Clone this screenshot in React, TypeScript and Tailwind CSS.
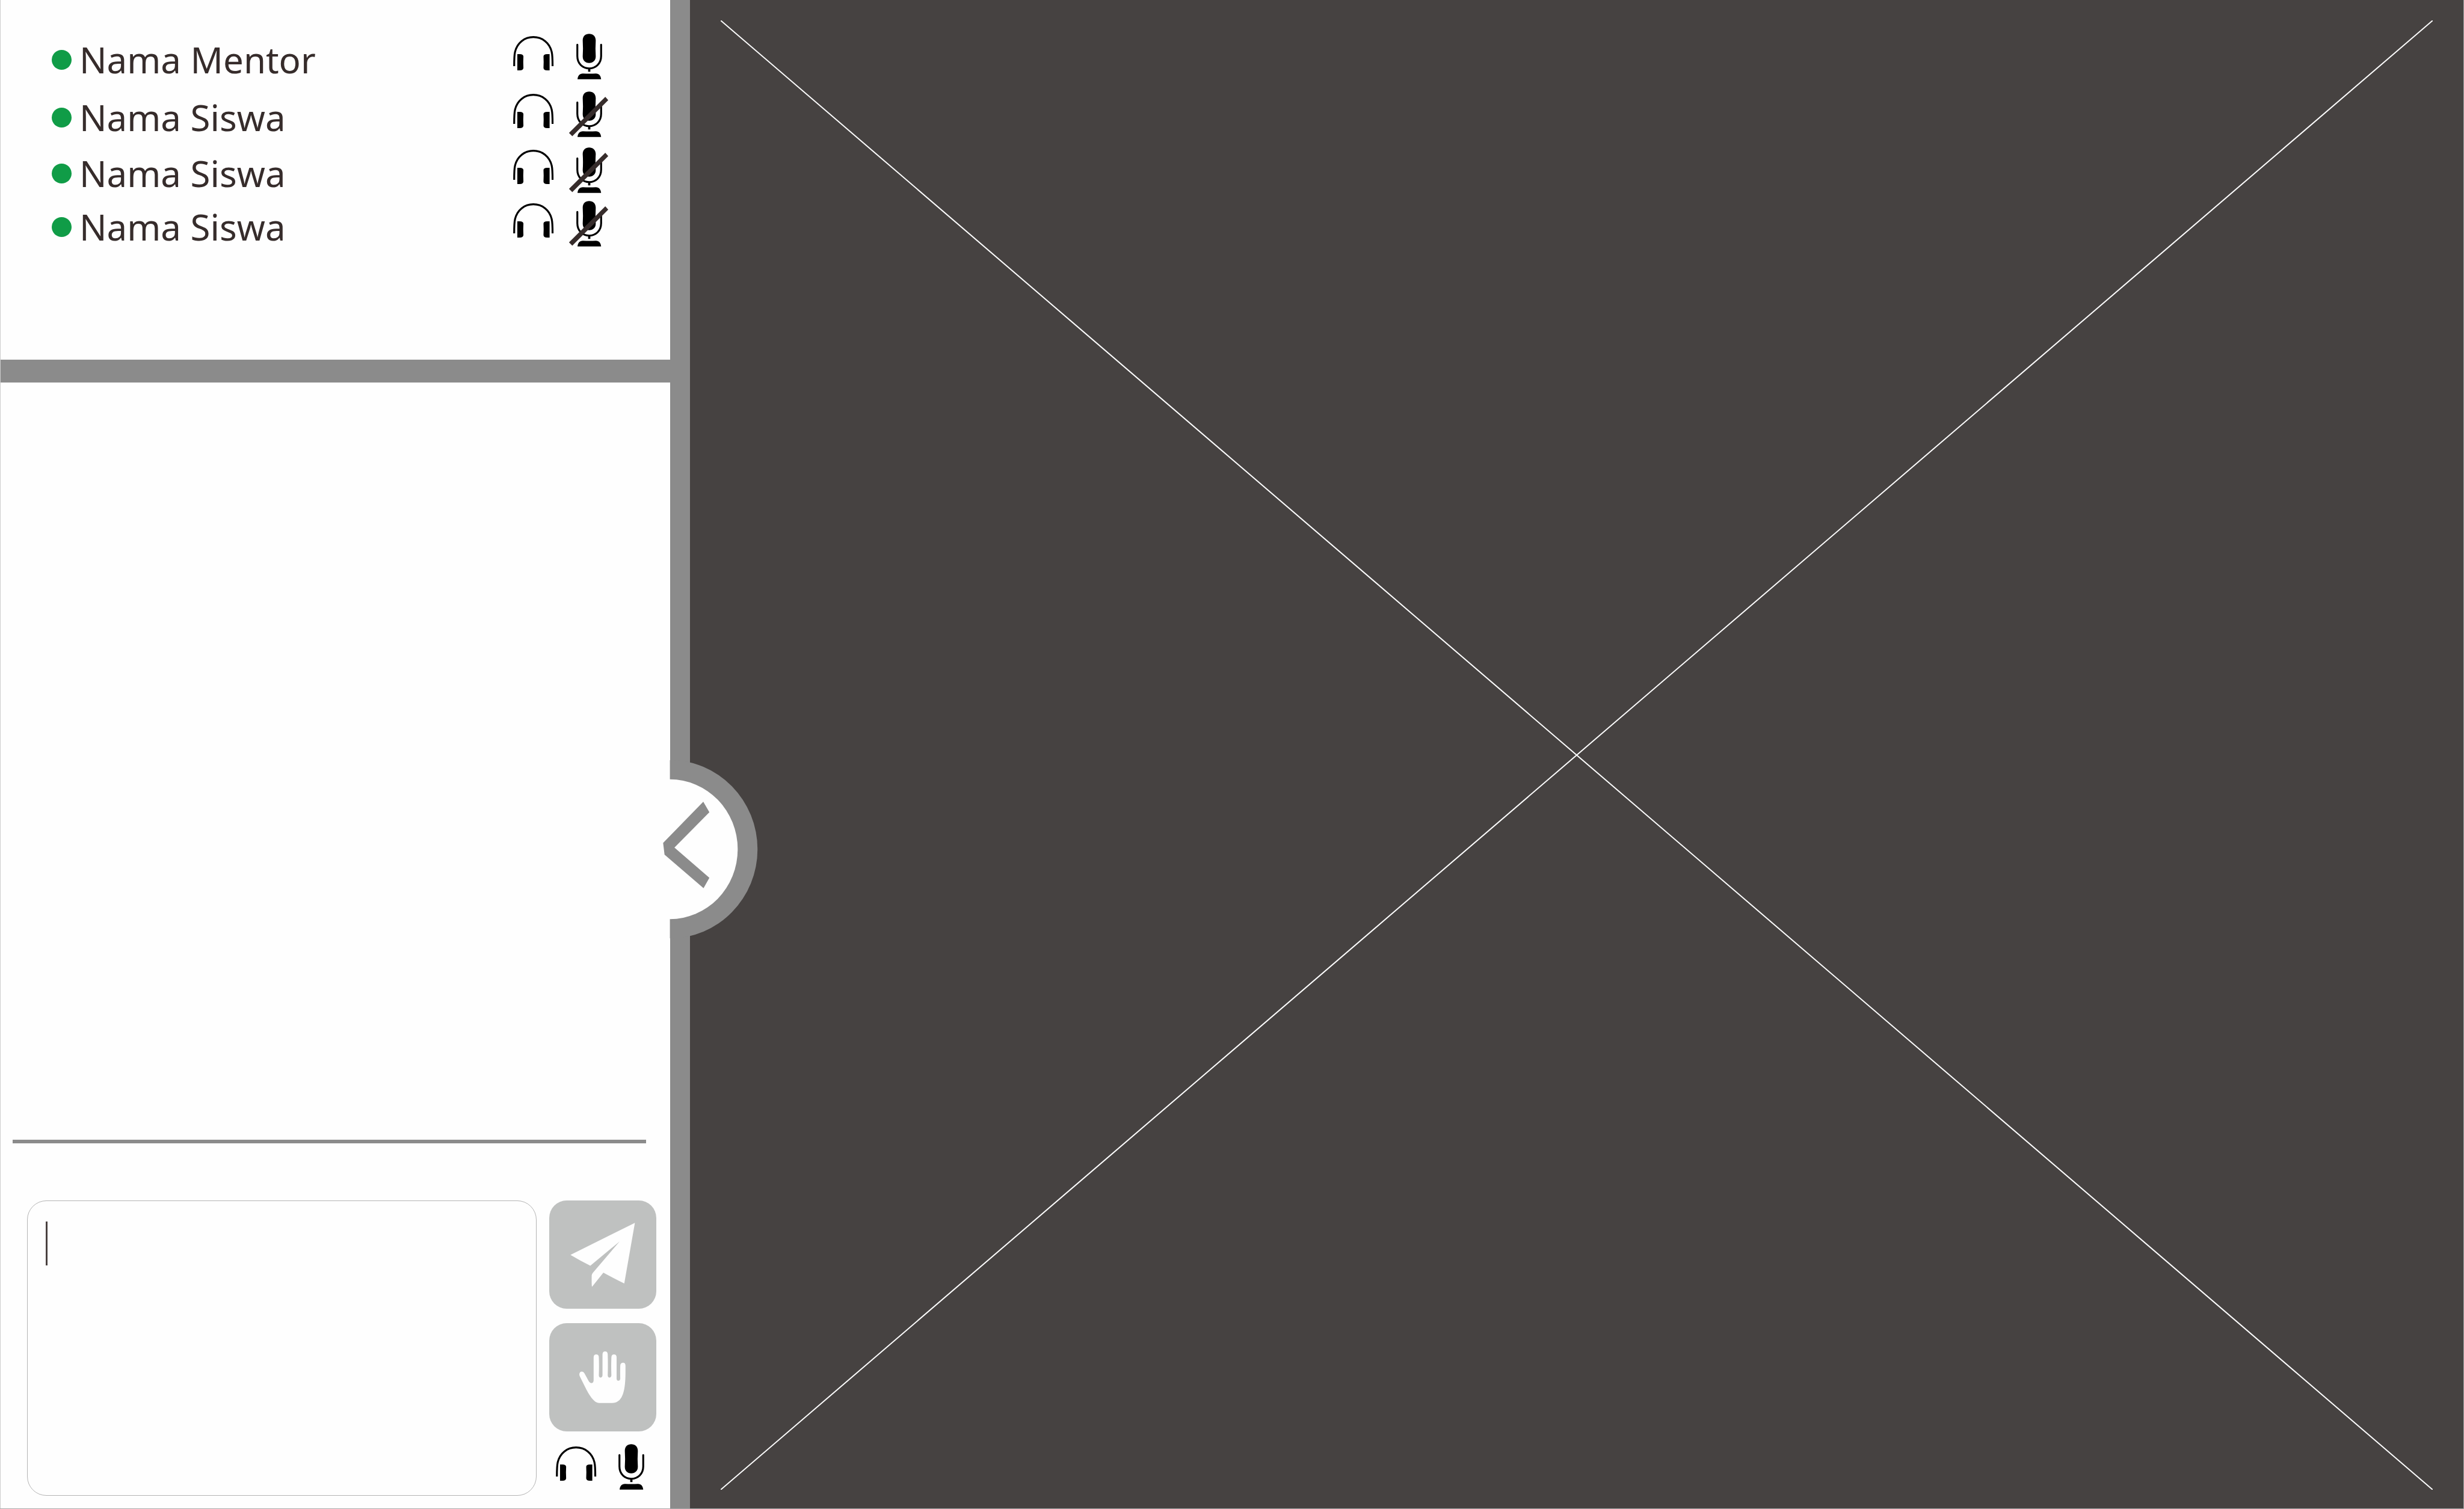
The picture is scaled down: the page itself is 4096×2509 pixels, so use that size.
type Participant = { name: string; muted: boolean; spacing: string };

const participants: Participant[] = [
  { name: "Nama Mentor", muted: false, spacing: "" },
  { name: "Nama Siswa", muted: true, spacing: "mt-5" },
  { name: "Nama Siswa", muted: true, spacing: "mt-[17px]" },
  { name: "Nama Siswa", muted: true, spacing: "mt-[13px]" },
];

function HeadphonesIcon() {
  return (
    <svg viewBox="126 72 231 261" className="block h-[76px] w-[67px] overflow-visible" aria-hidden="true">
      <path
        d="M132 258C132 210 132 195 137 175C149 125 190 91 242 91C294 91 335 125 347 175C352 195 352 210 352 258"
        fill="none"
        stroke="#000"
        strokeWidth="11"
      />
      <path d="M150 189H165Q183 189 185 202Q183 235 185 268Q183 281 165 282H150Z" />
      <path d="M335 189H320Q301 189 300 202Q302 235 300 268Q301 281 320 282H335Z" />
    </svg>
  );
}

function MicIcon({ muted = false }: { muted?: boolean }) {
  return (
    <svg viewBox="487 72 149 261" className="block h-[76px] w-[43px] overflow-visible" aria-hidden="true">
      <path d="M524 110C524 85 540 72 561 72S599 85 599 110Q596 156 599 202C599 226 583 240 561 240S524 226 524 202Q527 156 524 110Z" />
      <path
        d="M493 134V200C493 245 525 271 561 271S630 245 630 200V134"
        fill="none"
        stroke="#000"
        strokeWidth="11"
        strokeLinecap="round"
      />
      <path d="M555 271H568V290H555Z" />
      <path d="M494 333C496 312 506 301 525 300Q562 302 600 300C618 301 628 312 630 333Z" />
      {muted && <path d="M654 102L671 121L464 329L445 310Z" fill="#362c2b" />}
    </svg>
  );
}

function PlaneIcon() {
  return (
    <svg viewBox="63 53 615 619" className="block size-full" aria-hidden="true">
      <path
        d="M185 364L555 180L494 528Q434 499 374 466L309 547Q306 547 307 482Q308 474 313 468L467 287L299 426Q240 397 185 364Z"
        fill="#fefefe"
      />
    </svg>
  );
}

function HandIcon() {
  return (
    <svg viewBox="63 67 615 619" className="block size-full" aria-hidden="true">
      <path
        d="M236 360C236 351 242 344 251 344Q260 345 265 353L289 397Q297 410 306 410Q317 410 318 394V262Q318 245 333 245T348 262Q350 315 348 365Q349 378 358 378T369 365V246Q369 228 384 228T399 246Q401 305 399 365Q400 378 409 378T420 365Q418 315 420 262Q420 245 435 245T450 262V385Q451 396 460 396T471 385Q470 345 471 311Q471 294 486 293T501 311V345C501 460 483 524 424 524H350C318 524 289 472 268 430L240 374Q236 366 236 360Z"
        fill="#fefefe"
      />
    </svg>
  );
}

function ParticipantList() {
  return (
    <ul className="h-[598px] shrink-0 pt-14 pr-[113px] pl-[85px]">
      {participants.map((p, i) => (
        <li key={i} className={`flex h-[76px] items-center justify-between ${p.spacing}`}>
          <div className="flex items-center gap-[13px] pt-[10px]">
            <span className="size-[33px] rounded-full bg-[#109c47]" />
            <span className="text-[60px] leading-[66px] whitespace-nowrap text-[#362c2b]">{p.name}</span>
          </div>
          <div className="flex gap-[38px]">
            <HeadphonesIcon />
            <MicIcon muted={p.muted} />
          </div>
        </li>
      ))}
    </ul>
  );
}

function Composer() {
  return (
    <form
      className="flex gap-[21px] pt-[95px] pr-[23px] pb-[21px] pl-11"
      onSubmit={(e) => e.preventDefault()}
    >
      <div className="relative flex-1">
        <textarea
          aria-label="Pesan"
          className="block h-full w-full resize-none rounded-[32px] border border-[#b4b4b4] bg-[#fefefe] px-8 py-9 text-[60px] leading-[66px] text-[#362c2b] outline-none"
        />
        <span className="pointer-events-none absolute top-[35px] left-[31px] h-[73px] w-[3px] bg-[#4a4140]" />
      </div>
      <div className="w-[178px]">
        <button type="submit" aria-label="Kirim" className="block h-[180px] w-full rounded-[29px] bg-[#bfc1c0]">
          <PlaneIcon />
        </button>
        <button type="button" aria-label="Angkat tangan" className="mt-6 block h-[180px] w-full rounded-[29px] bg-[#bfc1c0]">
          <HandIcon />
        </button>
        <div className="mt-[21px] mb-[10px] flex gap-[37px] pl-[11px]">
          <button type="button" aria-label="Audio">
            <HeadphonesIcon />
          </button>
          <button type="button" aria-label="Mikrofon">
            <MicIcon />
          </button>
        </div>
      </div>
    </form>
  );
}

function CollapseHandle() {
  return (
    <div className="relative z-10 w-[33px] shrink-0 bg-[#8b8b8b]">
      <button
        type="button"
        aria-label="Tutup panel"
        className="absolute top-[56.3%] -left-4 h-[297px] w-[163px] -translate-y-1/2"
      >
        <svg viewBox="1264 1454 188 342" className="block size-full" aria-hidden="true">
          <path d="M1282 1454A168 171 0 0 1 1282 1796Z" fill="#8b8b8b" />
          <path d="M1264 1491H1282A130 134 0 0 1 1282 1759H1264Z" fill="#fefefe" />
          <path
            d="M1346 1534L1357.700 1554L1290.700 1621.700L1357.700 1679.700L1346.500 1699.700L1271.700 1635.300L1269 1613Z"
            fill="#8b8b8b"
          />
        </svg>
      </button>
    </div>
  );
}

export default function App() {
  return (
    <div className="flex h-screen w-full overflow-hidden border-r border-b border-[#a8a8a8] bg-[#fefefe] font-['Noto_Sans','DejaVu_Sans',sans-serif]">
      <aside className="flex w-[1114px] shrink-0 flex-col border-l border-[#cccccc]">
        <ParticipantList />
        <div className="h-[38px] shrink-0 bg-[#8b8b8b]" />
        <section aria-label="Obrolan" className="flex min-h-0 flex-1 flex-col">
          <div className="flex-1" />
          <hr className="mr-10 ml-5 h-[6px] border-0 bg-[#8b8b8b]" />
          <Composer />
        </section>
      </aside>
      <CollapseHandle />
      <main className="flex min-w-0 flex-1 bg-[#464241] pt-[34px] pr-[51px] pb-[31px] pl-[51px]">
        <svg className="block h-full w-full" aria-hidden="true">
          <line x1="0" y1="0" x2="100%" y2="100%" stroke="#fefefe" strokeWidth="2" />
          <line x1="100%" y1="0" x2="0" y2="100%" stroke="#fefefe" strokeWidth="2" />
        </svg>
      </main>
    </div>
  );
}
